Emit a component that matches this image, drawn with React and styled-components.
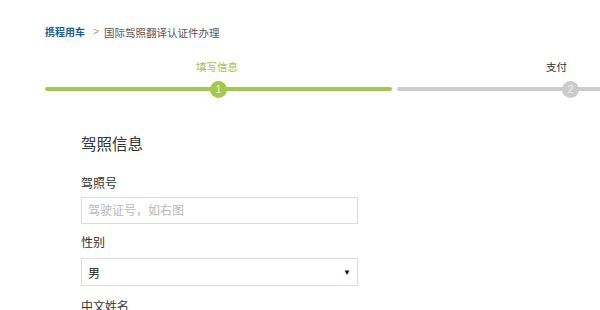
import React from 'react';
import styled, { createGlobalStyle } from 'styled-components';

const GlobalStyle = createGlobalStyle`
  body {
    margin: 0;
    background: #fff;
    font-family: "Liberation Sans", "Noto Sans CJK SC", sans-serif;
    color: #333;
    overflow: hidden;
  }
`;

const steps = [
  { num: 1, label: '填写信息', active: true, shift: -3 },
  { num: 2, label: '支付', active: false, shift: -28 },
];

const App = () => (
  <Page>
    <GlobalStyle />
    <Breadcrumb>
      <CrumbLink>携程用车</CrumbLink>
      <CrumbSep>&gt;</CrumbSep>
      <span>国际驾照翻译认证件办理</span>
    </Breadcrumb>
    <StepBar>
      {steps.map((s) => (
        <Step key={s.num}>
          <StepLabel active={s.active} shift={s.shift}>{s.label}</StepLabel>
          <StepTrack active={s.active}>
            <StepDot active={s.active}>{s.num}</StepDot>
          </StepTrack>
        </Step>
      ))}
    </StepBar>
    <Form>
      <Title>驾照信息</Title>
      <Field>
        <Label>驾照号</Label>
        <Input placeholder="驾驶证号，如右图" />
      </Field>
      <Field>
        <Label>性别</Label>
        <Select>
          <span>男</span>
          <Caret>▼</Caret>
        </Select>
      </Field>
      <Field>
        <Label>中文姓名</Label>
      </Field>
    </Form>
  </Page>
);

const Page = styled.div`
  width: 600px;
  height: 310px;
  overflow: hidden;
  padding: 25px 0 0 45px;
  box-sizing: border-box;
`;

const Breadcrumb = styled.div`
  display: flex;
  align-items: center;
  font-size: 10.5px;
  line-height: 16px;
  color: #555;
`;

const CrumbLink = styled.span`
  color: #1f5c96;
  font-weight: 600;
  font-size: 10px;
`;

const CrumbSep = styled.span`
  margin: 0 5px 0 8px;
  color: #999;
  font-family: "Liberation Mono", monospace;
  font-size: 10px;
`;

const StepBar = styled.div`
  display: flex;
  gap: 5px;
  width: 800px;
  margin-top: 19px;
`;

const Step = styled.div`
  width: 347px;
  display: flex;
  flex-direction: column;
  align-items: center;
`;

const StepLabel = styled.div`
  font-size: 10.5px;
  line-height: 14px;
  color: ${(p) => (p.active ? '#9cc548' : '#333')};
  margin-left: ${(p) => p.shift}px;
`;

const StepTrack = styled.div`
  align-self: stretch;
  height: 4px;
  border-radius: 2px;
  margin-top: 13px;
  background: ${(p) => (p.active ? '#a2c94c' : '#cbcbcb')};
  display: flex;
  align-items: center;
  justify-content: center;
`;

const StepDot = styled.div`
  width: 17px;
  height: 17px;
  border-radius: 50%;
  flex-shrink: 0;
  background: ${(p) => (p.active ? '#a2c94c' : '#cbcbcb')};
  color: ${(p) => (p.active ? '#e8f3c8' : '#eee')};
  font-size: 11px;
  line-height: 17px;
  text-align: center;
`;

const Form = styled.div`
  margin: 43px 0 0 36px;
  width: 277px;
`;

const Title = styled.div`
  font-size: 15.5px;
  line-height: 22px;
  color: #333;
  margin-bottom: 20px;
`;

const Field = styled.div`
  display: flex;
  flex-direction: column;
  margin-bottom: 11px;
`;

const Label = styled.div`
  font-size: 12px;
  line-height: 16px;
  color: #333;
  margin-bottom: 5px;
`;

const Input = styled.input`
  height: 27px;
  box-sizing: border-box;
  border: 1px solid #dcdcdc;
  padding: 0 6px;
  font-size: 12px;
  font-family: inherit;
  outline: none;
  &::placeholder {
    color: #b8b8b8;
  }
`;

const Select = styled.div`
  height: 28px;
  margin-top: 2px;
  margin-bottom: 2px;
  box-sizing: border-box;
  border: 1px solid #dcdcdc;
  padding: 0 6px 0 6px;
  font-size: 12px;
  color: #222;
  display: flex;
  align-items: center;
  justify-content: space-between;
`;

const Caret = styled.span`
  font-size: 8px;
  color: #111;
`;

export default App;
